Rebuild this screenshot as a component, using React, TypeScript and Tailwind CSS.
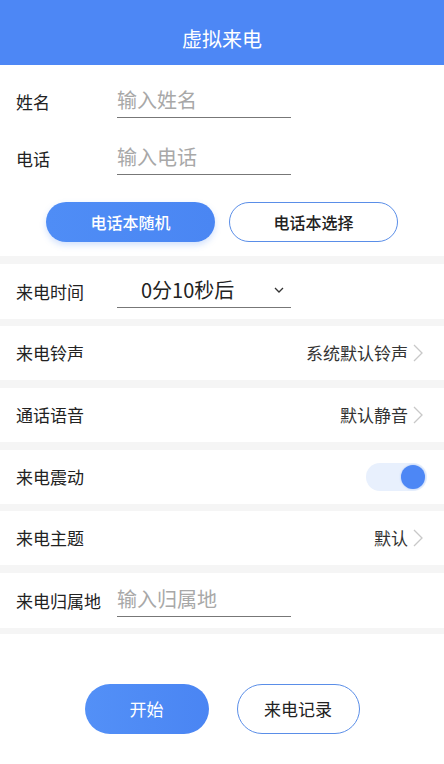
import React, { useState } from 'react';

const Chevron = () => (
  <svg width="12" height="20" viewBox="0 0 12 20" className="ml-1">
    <path d="M2 2 L10 10 L2 18" fill="none" stroke="#c8c8c8" strokeWidth="1.3" />
  </svg>
);

const Sep = ({ h = 'h-2' }: { h?: string }) => <div className={`${h} bg-[#f5f5f5]`} />;

const NavRow = ({ label, value }: { label: string; value: string }) => (
  <div className="flex h-[54px] items-center justify-between bg-white pl-4 pr-5">
    <span className="text-[17px] text-[#222]">{label}</span>
    <div className="flex items-center text-[17px] text-[#333]">
      {value}
      <Chevron />
    </div>
  </div>
);

export default function App() {
  const [vibrate, setVibrate] = useState(true);

  return (
    <div
      className="flex h-[764px] w-[444px] flex-col overflow-hidden bg-white"
      style={{ fontFamily: '"Noto Sans CJK SC", "Noto Sans", sans-serif' }}
    >
      <div className="flex h-[65px] items-end justify-center bg-[#4d87f5] pb-[11px]">
        <h1 className="text-[20px] text-white">虚拟来电</h1>
      </div>

      <div className="bg-white pt-2 pb-[14px]">
        <div className="flex h-[57px] items-center pl-4">
          <span className="w-[101px] text-[17px] text-[#222]">姓名</span>
          <input
            placeholder="输入姓名"
            className="w-[174px] border-b border-[#777] pb-[2px] text-[20px] text-[#333] outline-none placeholder:text-[#a8a8a8]"
          />
        </div>
        <div className="flex h-[57px] items-center pl-4">
          <span className="w-[101px] text-[17px] text-[#222]">电话</span>
          <input
            placeholder="输入电话"
            className="w-[174px] border-b border-[#777] pb-[2px] text-[20px] text-[#333] outline-none placeholder:text-[#a8a8a8]"
          />
        </div>
        <div className="mt-[15px] flex justify-center gap-[14px]">
          <button className="h-10 w-[169px] rounded-full bg-gradient-to-r from-[#4f8df6] to-[#4a86f3] text-[16px] font-medium text-white shadow-[0_3px_6px_rgba(77,135,245,0.25)]">
            电话本随机
          </button>
          <button className="h-10 w-[169px] rounded-full border border-[#5a8ee8] bg-white text-[16px] font-medium text-[#222]">
            电话本选择
          </button>
        </div>
      </div>

      <Sep />
      <div className="flex h-[55px] items-center bg-white pl-4">
        <span className="w-[101px] text-[17px] text-[#222]">来电时间</span>
        <div className="flex w-[174px] items-center justify-between border-b border-[#777] pb-[2px] pl-6 pr-[6px]">
          <span className="text-[20px] text-[#222]">0分10秒后</span>
          <svg width="12" height="8" viewBox="0 0 12 8">
            <path d="M2 2 L6 6 L10 2" fill="none" stroke="#333" strokeWidth="1.3" />
          </svg>
        </div>
      </div>
      <Sep h="h-[7px]" />
      <NavRow label="来电铃声" value="系统默认铃声" />
      <Sep />
      <NavRow label="通话语音" value="默认静音" />
      <Sep />
      <div className="flex h-[54px] items-center justify-between bg-white pl-4 pr-[17px]">
        <span className="text-[17px] text-[#222]">来电震动</span>
        <button
          onClick={() => setVibrate(!vibrate)}
          className={`flex h-[28px] w-[61px] items-center rounded-full px-[2px] ${vibrate ? 'justify-end bg-[#e8f0fd]' : 'justify-start bg-[#eee]'}`}
        >
          <span className="h-[24px] w-[24px] rounded-full bg-[#4d87f5] shadow-[0_0_2px_rgba(77,135,245,0.5)]" />
        </button>
      </div>
      <Sep h="h-[7px]" />
      <NavRow label="来电主题" value="默认" />
      <Sep />
      <div className="flex h-[55px] items-center bg-white pl-4">
        <span className="w-[101px] text-[17px] text-[#222]">来电归属地</span>
        <input
          placeholder="输入归属地"
          className="w-[174px] border-b border-[#777] pb-[2px] text-[20px] text-[#333] outline-none placeholder:text-[#a8a8a8]"
        />
      </div>
      <Sep h="h-[6px]" />

      <div className="flex flex-1 justify-center gap-7 bg-white pt-[50px]">
        <button className="h-[50px] w-[124px] rounded-full bg-gradient-to-r from-[#5390f7] to-[#4a85f3] text-[17px] text-white">
          开始
        </button>
        <button className="h-[50px] w-[123px] rounded-full border border-[#5a8ee8] bg-white text-[17px] text-[#222]">
          来电记录
        </button>
      </div>
    </div>
  );
}
